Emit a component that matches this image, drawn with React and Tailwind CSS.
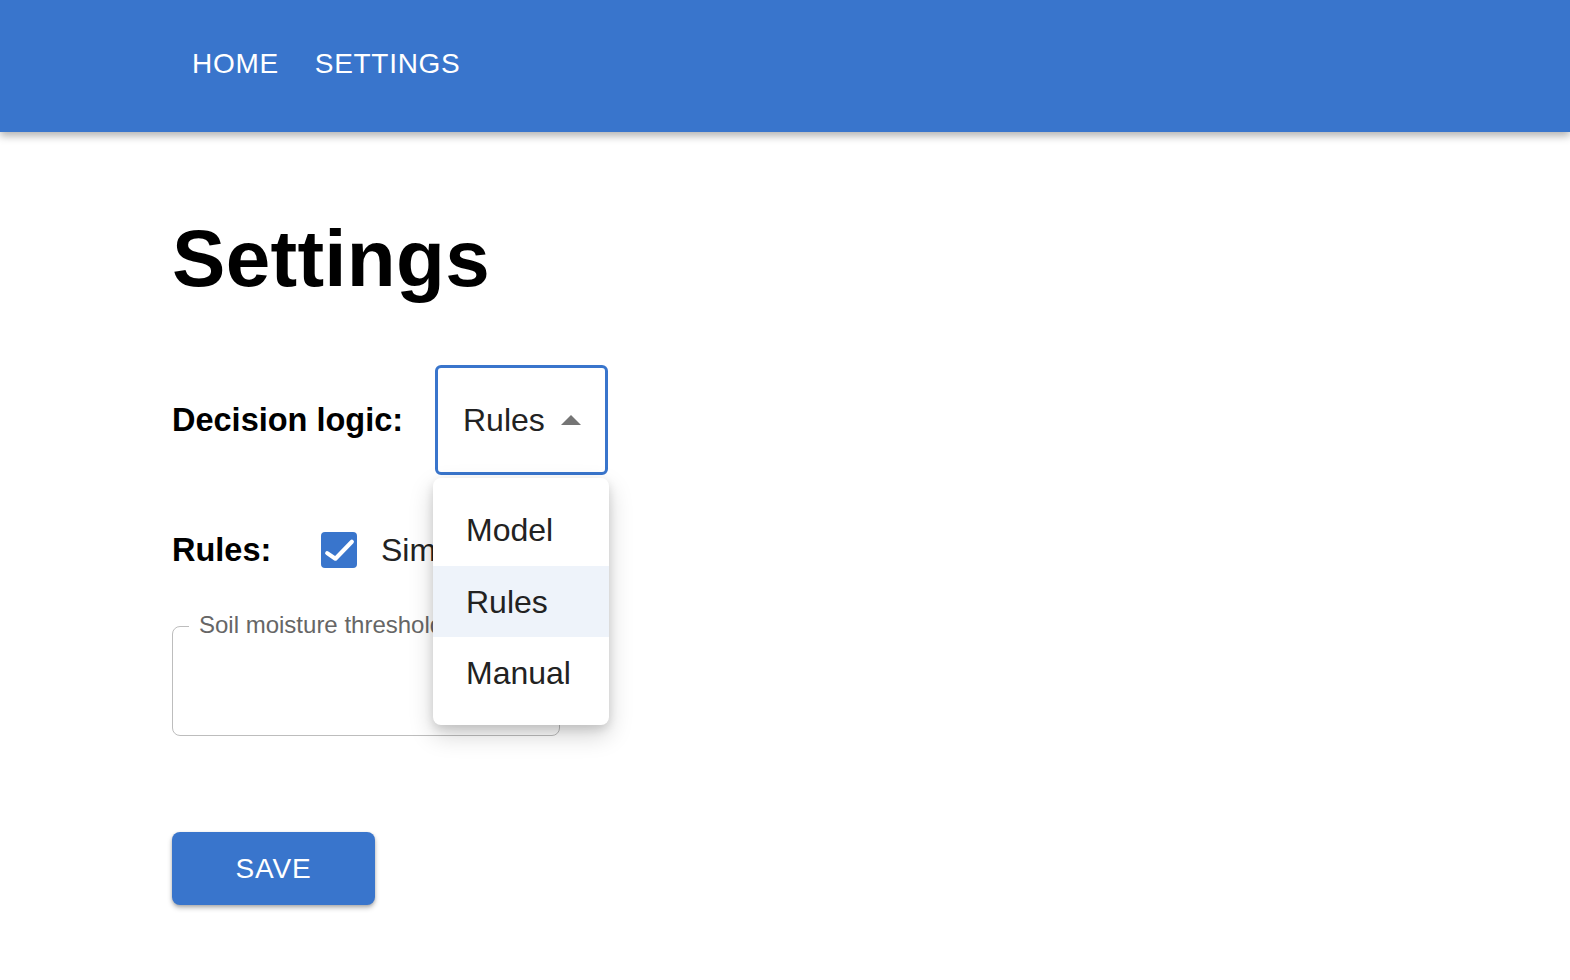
import React from "react";

export default function App() {
  const font = { fontFamily: '"Liberation Sans", Arial, sans-serif' };
  return (
    <div className="min-h-[980px] bg-white text-black" style={font}>
      <nav className="relative z-10 flex h-[132px] items-center bg-[#3975cc] pl-[192px] shadow-[0_4px_8px_rgba(0,0,0,0.3)]">
        <div className="flex items-center gap-[36px] pb-[4px] text-[28px] tracking-[0.7px] text-white">
          <span>HOME</span>
          <span>SETTINGS</span>
        </div>
      </nav>
      <main className="pl-[172px]">
        <h1 className="mt-[87px] text-[80px] font-bold leading-[80px] tracking-[0.3px]">Settings</h1>

        <div className="mt-[66px] flex h-[110px] items-center">
          <span className="w-[263px] text-[32.5px] font-bold">Decision logic:</span>
          <div className="relative">
            <div className="flex h-[110px] w-[173px] items-center justify-between rounded-[6px] border-[3px] border-[#3975cc] pl-[25px] pr-[24px]">
              <span className="text-[32px] text-[#222]">Rules</span>
              <svg width="20" height="10" viewBox="0 0 20 10" className="mb-[1px]">
                <polygon points="0,10 10,0 20,10" fill="#757575" />
              </svg>
            </div>
            <div className="absolute left-[-2px] top-[113px] z-20 w-[176px] rounded-[8px] bg-white py-[16px] shadow-[0_10px_24px_rgba(0,0,0,0.18),0_4px_10px_rgba(0,0,0,0.12)]">
              <div className="flex h-[72px] items-center pl-[33px] text-[32px] text-[#222]">Model</div>
              <div className="flex h-[71px] items-center bg-[#eef3fa] pl-[33px] text-[32px] text-[#222]">Rules</div>
              <div className="flex h-[72px] items-center pl-[33px] text-[32px] text-[#222]">Manual</div>
            </div>
          </div>
        </div>

        <div className="mt-[45px] flex h-[60px] items-center">
          <span className="w-[149px] text-[32.5px] font-bold">Rules:</span>
          <div className="flex h-[36px] w-[36px] items-center justify-center rounded-[4px] bg-[#3975cc]">
            <svg width="36" height="36" viewBox="0 0 35 35">
              <path d="M6 20.5L14 26L30 9.5" fill="none" stroke="white" strokeWidth="4" strokeLinecap="round" strokeLinejoin="round" />
            </svg>
          </div>
          <span className="ml-[24px] text-[32px] text-[#222]">Simple rules</span>
        </div>

        <div className="relative mt-[46px] h-[110px] w-[388px] rounded-[8px] border-[1.5px] border-[#bdbdbd]">
          <span className="absolute left-[16px] top-[-20px] bg-white px-[10px] text-[24px] text-[#666]">Soil moisture threshold</span>
        </div>

        <button className="mt-[96px] flex h-[73px] w-[203px] items-center justify-center rounded-[8px] bg-[#3975cc] text-[28px] tracking-[0.8px] text-white shadow-[0_3px_5px_rgba(0,0,0,0.25),0_1px_3px_rgba(0,0,0,0.15)]">
          SAVE
        </button>
      </main>
    </div>
  );
}
